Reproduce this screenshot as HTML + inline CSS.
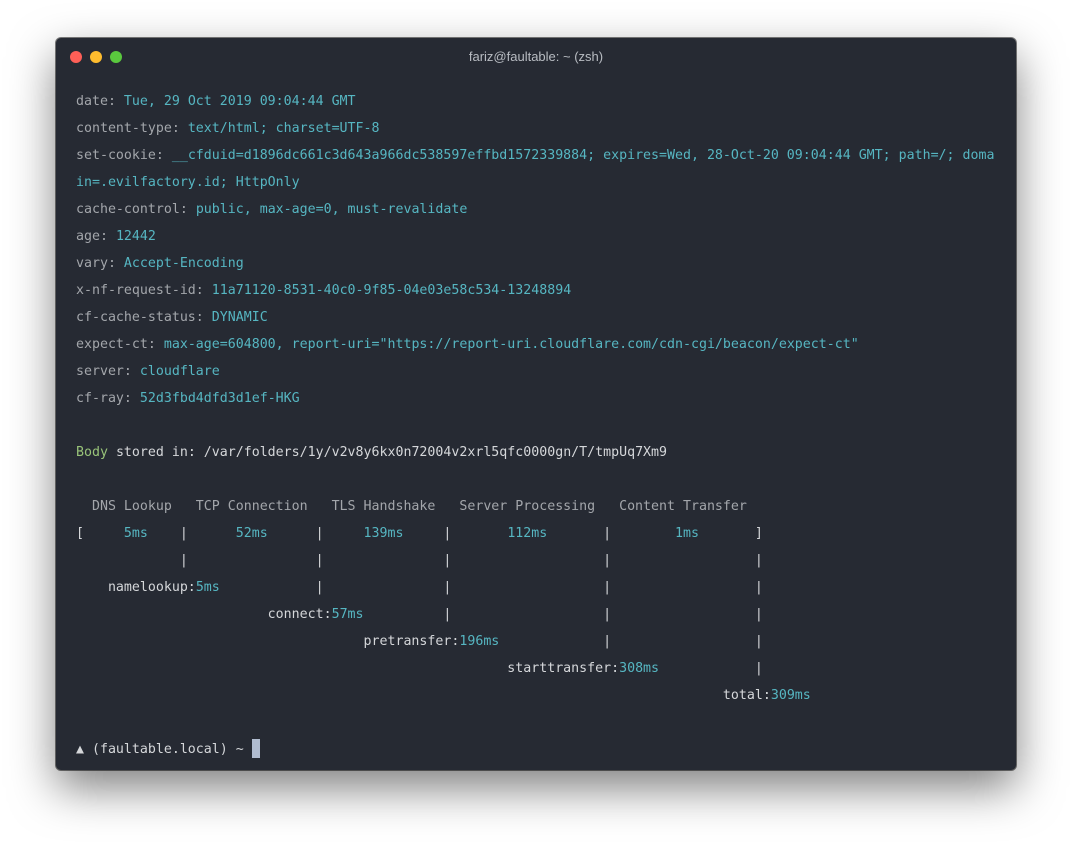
<!DOCTYPE html>
<html><head><meta charset="utf-8"><style>
html,body{margin:0;padding:0;width:1072px;height:845px;background:#fff;overflow:hidden}
.win{position:absolute;left:56px;top:38px;width:960px;height:732px;background:#262a33;border-radius:5px;box-shadow:0 18px 45px rgba(0,0,0,.5),0 0 0 1px rgba(0,0,0,.5)}
.dot{position:absolute;top:13px;width:12px;height:12px;border-radius:50%}
.title{position:absolute;top:11px;left:0;width:100%;text-align:center;font:13px "Liberation Sans",sans-serif;color:#b8bcc2}
pre{position:absolute;left:20px;top:50px;margin:0;font:13.28px/27px "DejaVu Sans Mono",monospace;color:#a3a6ab;white-space:pre}
.v{color:#56b6c2}.w{color:#d5d7da}.g{color:#98c379}
.cur{display:inline-block;width:8px;height:19px;background:#b0bcd0;vertical-align:-5px}
</style></head><body>
<div class="win">
<div class="dot" style="left:14px;background:#fd5f57"></div>
<div class="dot" style="left:34px;background:#febc2e"></div>
<div class="dot" style="left:54px;background:#5ac83e"></div>
<div class="title">fariz@faultable: ~ (zsh)</div>
<pre>date: <span class="v">Tue, 29 Oct 2019 09:04:44 GMT</span>
content-type: <span class="v">text/html; charset=UTF-8</span>
set-cookie: <span class="v">__cfduid=d1896dc661c3d643a966dc538597effbd1572339884; expires=Wed, 28-Oct-20 09:04:44 GMT; path=/; doma</span>
<span class="v">in=.evilfactory.id; HttpOnly</span>
cache-control: <span class="v">public, max-age=0, must-revalidate</span>
age: <span class="v">12442</span>
vary: <span class="v">Accept-Encoding</span>
x-nf-request-id: <span class="v">11a71120-8531-40c0-9f85-04e03e58c534-13248894</span>
cf-cache-status: <span class="v">DYNAMIC</span>
expect-ct: <span class="v">max-age=604800, report-uri="https://report-uri.cloudflare.com/cdn-cgi/beacon/expect-ct"</span>
server: <span class="v">cloudflare</span>
cf-ray: <span class="v">52d3fbd4dfd3d1ef-HKG</span>

<span class="g">Body</span><span class="w"> stored in: /var/folders/1y/v2v8y6kx0n72004v2xrl5qfc0000gn/T/tmpUq7Xm9</span>

  DNS Lookup   TCP Connection   TLS Handshake   Server Processing   Content Transfer
<span class="w">[     <span class="v">5ms</span>    |      <span class="v">52ms</span>      |     <span class="v">139ms</span>     |       <span class="v">112ms</span>       |        <span class="v">1ms</span>       ]
             |                |               |                   |                  |
    namelookup:<span class="v">5ms</span>            |               |                   |                  |
                        connect:<span class="v">57ms</span>          |                   |                  |
                                    pretransfer:<span class="v">196ms</span>             |                  |
                                                      starttransfer:<span class="v">308ms</span>            |
                                                                                 total:<span class="v">309ms</span></span>

<span class="w">▲ (faultable.local) ~ </span><span class="cur"></span></pre>
</div>
</body></html>
